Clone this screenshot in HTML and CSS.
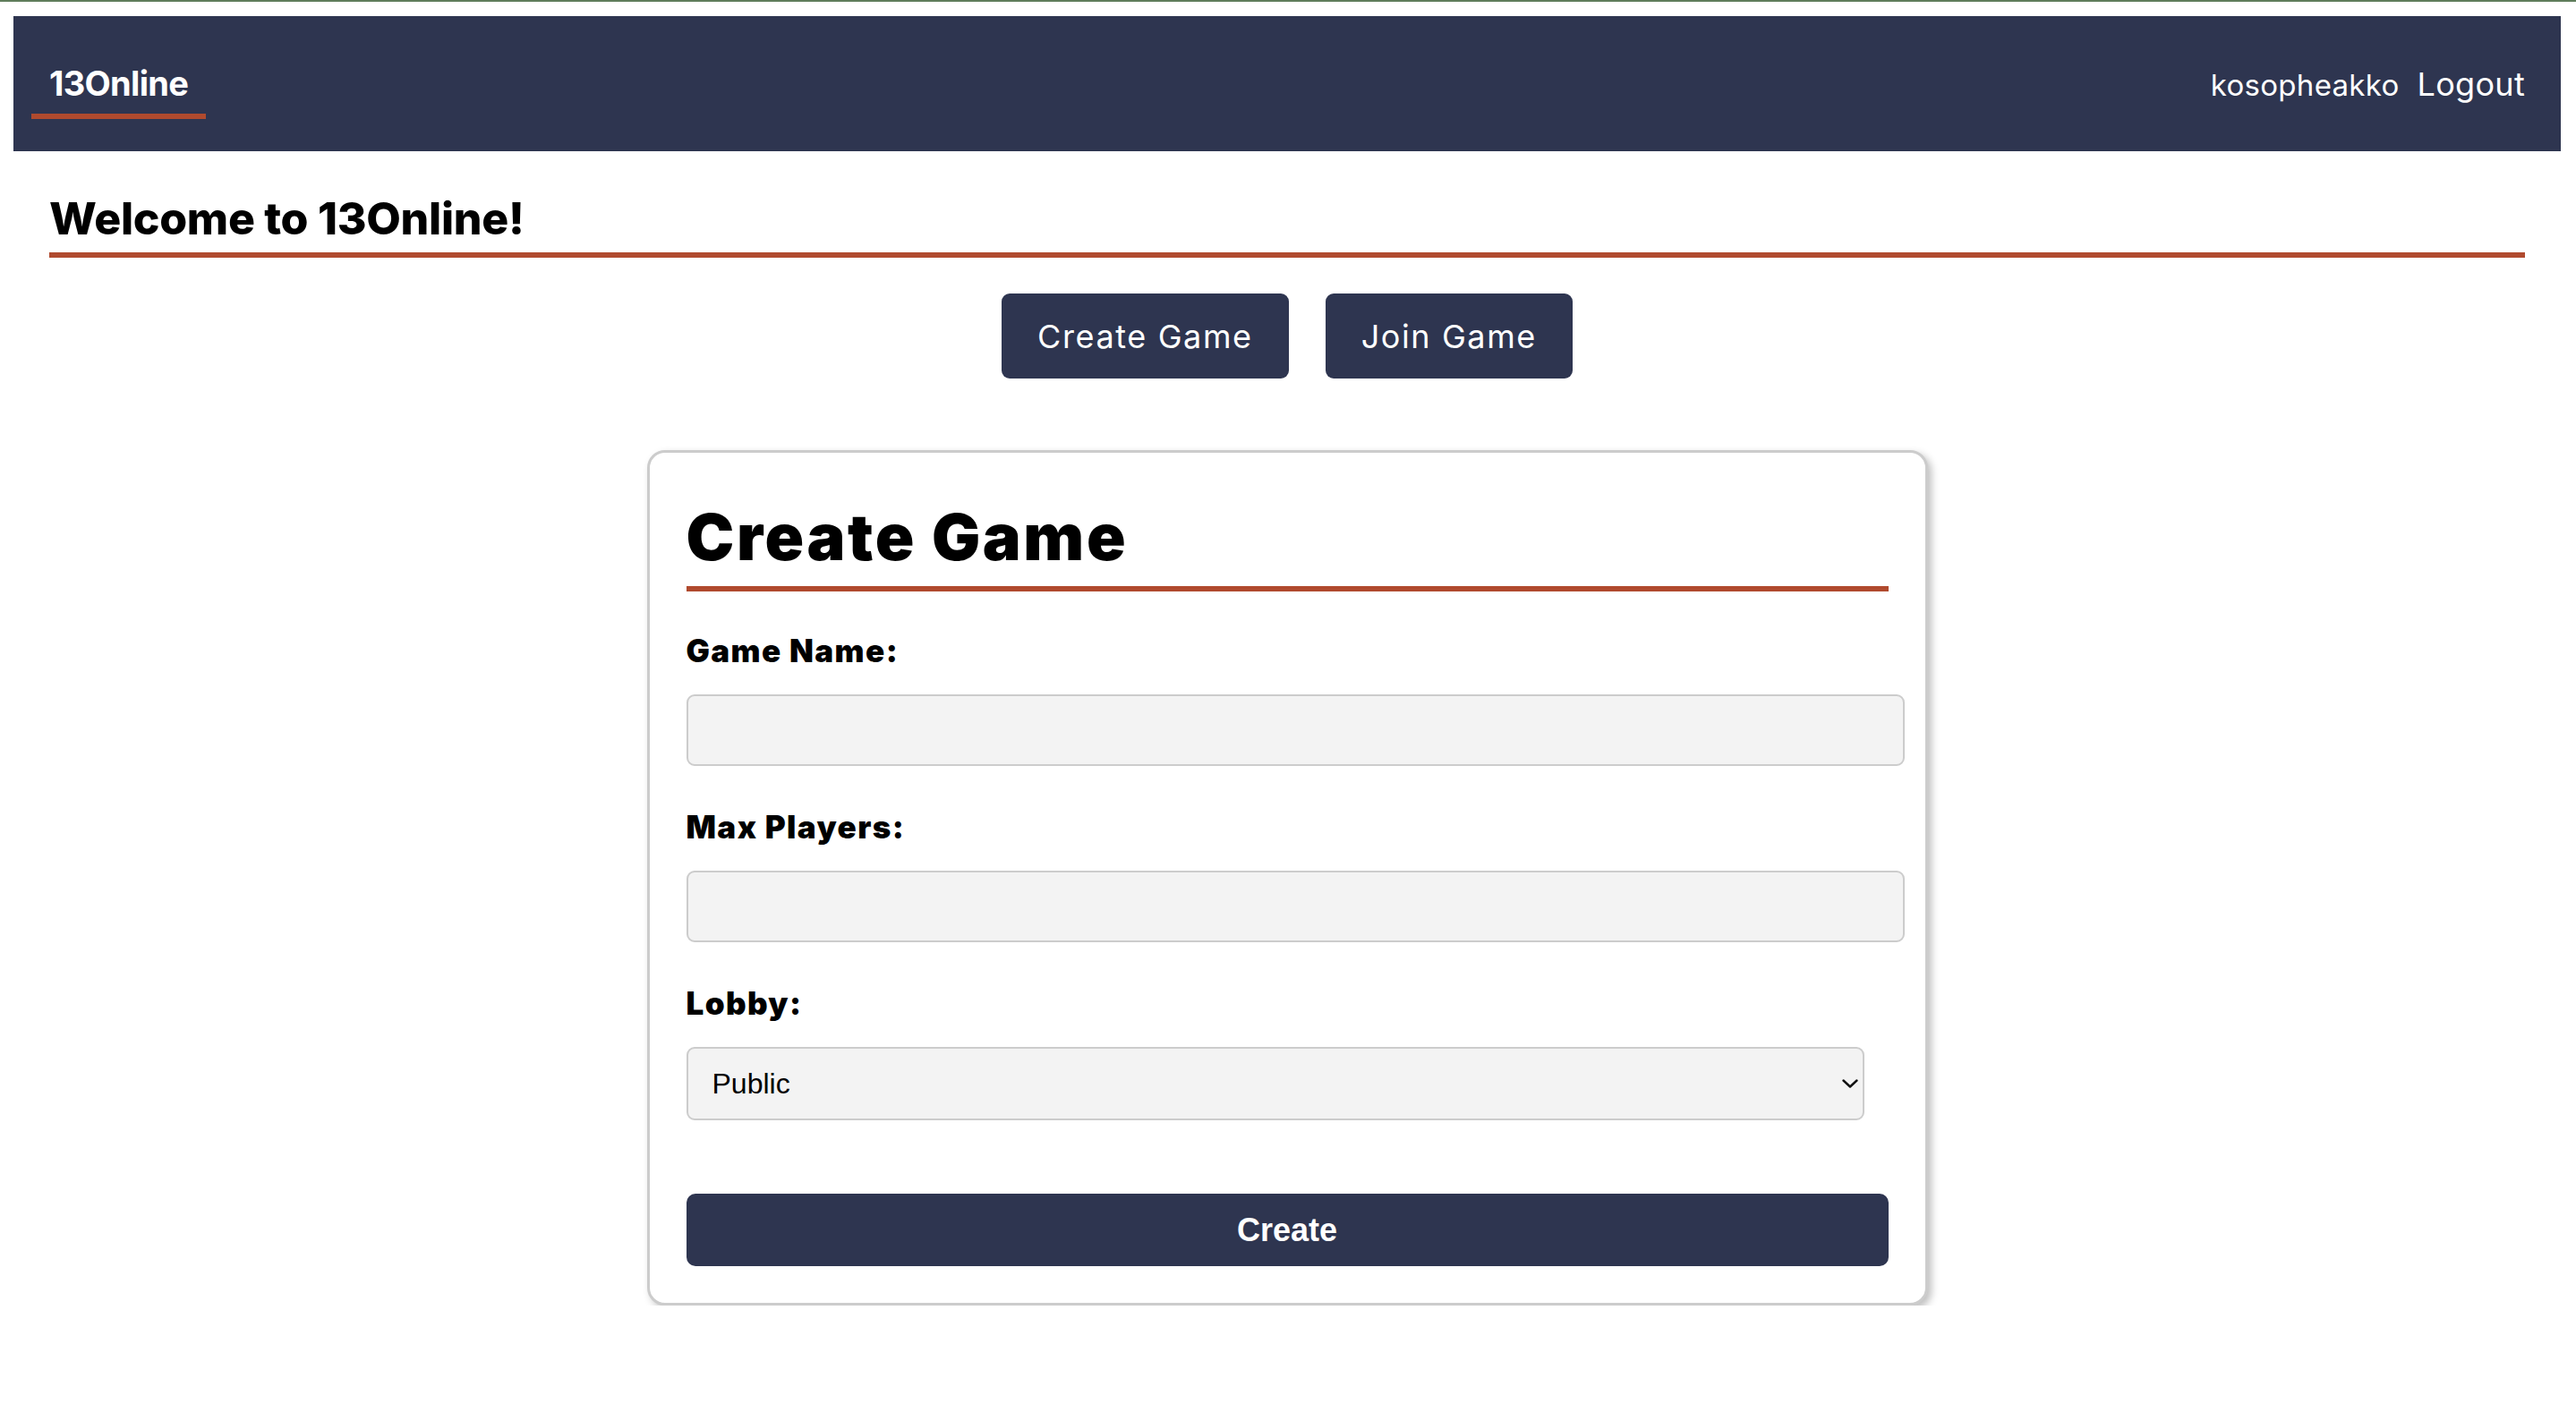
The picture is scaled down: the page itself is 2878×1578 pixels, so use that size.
FILE: index.html
```html
<!DOCTYPE html>
<html lang="en">
<head>
<meta charset="utf-8">
<title>13Online</title>
<link rel="stylesheet" href="styles.css">
</head>
<body>
<div class="topline"></div>
<div class="page">
  <nav class="nav">
    <a class="brand" href="#">13Online</a>
    <div class="user">
      <span class="username">kosopheakko</span>
      <a class="logout" href="#">Logout</a>
    </div>
  </nav>
  <main class="main">
    <h2 class="welcome">Welcome to 13Online!</h2>
    <div class="actions">
      <button class="btn" type="button">Create Game</button>
      <button class="btn" type="button">Join Game</button>
    </div>
    <section class="card">
      <h1 class="card-title">Create Game</h1>
      <form class="form">
        <div class="field">
          <label class="label" for="gname">Game Name:</label>
          <input class="input" id="gname" type="text">
        </div>
        <div class="field">
          <label class="label" for="gmax">Max Players:</label>
          <input class="input" id="gmax" type="text">
        </div>
        <div class="field">
          <label class="label" for="globby">Lobby:</label>
          <div class="select-wrap">
            <select class="select" id="globby">
              <option>Public</option>
              <option>Private</option>
            </select>
            <svg class="chev" width="18" height="10" viewBox="0 0 18 10" aria-hidden="true">
              <path d="M1.5 1.5 L9 8.5 L16.5 1.5" fill="none" stroke="#111" stroke-width="2.4" stroke-linecap="round" stroke-linejoin="round"/>
            </svg>
          </div>
        </div>
        <button class="submit" type="button">Create</button>
      </form>
    </section>
  </main>
</div>
</body>
</html>
```

FILE: styles.css
```css
* { box-sizing: border-box; }

html, body {
  margin: 0;
  padding: 0;
  background: #ffffff;
}

body {
  font-family: Inter, "Liberation Sans", sans-serif;
  color: #000;
}

.topline {
  height: 2px;
  background: #5f7d5b;
}

.page {
  padding: 16px 17px 0 15px;
}

.nav {
  height: 151px;
  background: #2e3550;
  display: flex;
  align-items: center;
  justify-content: space-between;
  padding: 0 20px;
}

.brand {
  display: block;
  color: #fff;
  text-decoration: none;
  font-weight: 700;
  font-size: 38px;
  line-height: 46px;
  letter-spacing: -0.7px;
  padding: 16px 20px 11px;
  border-bottom: 6px solid #b04a2e;
}

.user {
  display: flex;
  align-items: baseline;
  color: #fff;
}

.username {
  font-size: 33px;
  letter-spacing: 0.3px;
}

.logout {
  color: #fff;
  text-decoration: none;
  font-size: 36px;
  letter-spacing: 0.3px;
  padding: 0 20px;
}

.main {
  padding: 0 40px 0 40px;
}

.welcome {
  margin: 45px 0 0;
  font-size: 50px;
  line-height: 60px;
  font-weight: 800;
  letter-spacing: -0.3px;
  padding-bottom: 8px;
  border-bottom: 6px solid #b04a2e;
}

.actions {
  margin-top: 40px;
  display: flex;
  justify-content: center;
  gap: 41px;
}

.btn {
  height: 95px;
  padding: 0 40px;
  background: #2e3550;
  color: #fff;
  border: none;
  border-radius: 9px;
  font-family: Inter, "Liberation Sans", sans-serif;
  font-size: 36px;
  letter-spacing: 1.6px;
  cursor: pointer;
}

.card {
  width: 1431px;
  margin: 80px auto 0;
  border: 3px solid #cccccc;
  border-radius: 20px;
  padding: 41px 41px 41px;
  box-shadow: 4px 4px 8px rgba(0, 0, 0, 0.25);
  background: #fff;
}

.card-title {
  margin: 10px 0 0;
  font-size: 72px;
  line-height: 86px;
  font-weight: 900;
  letter-spacing: 2.6px;
  padding-bottom: 12px;
  border-bottom: 6px solid #b04a2e;
}

.form {
  margin-top: 45px;
}

.field {
  margin-bottom: 47px;
}

.label {
  display: block;
  font-size: 35px;
  line-height: 42px;
  font-weight: 900;
  letter-spacing: 1.4px;
  margin-bottom: 28px;
}

.input {
  display: block;
  box-sizing: content-box;
  width: 100%;
  height: 76px;
  padding: 0 7px;
  border: 2px solid #cccccc;
  border-radius: 9px;
  background: #f3f3f3;
  font-family: "Liberation Sans", Arial, sans-serif;
  font-size: 32px;
  outline: none;
}

.select-wrap {
  position: relative;
  width: 98%;
}

.select {
  display: block;
  width: 100%;
  height: 82px;
  appearance: none;
  -webkit-appearance: none;
  border: 2px solid #cccccc;
  border-radius: 9px;
  background: #f3f3f3;
  padding: 0 60px 0 27px;
  font-family: "Liberation Sans", Arial, sans-serif;
  font-size: 32px;
  color: #000;
  outline: none;
}

.chev {
  position: absolute;
  right: 7px;
  top: 36px;
  pointer-events: none;
}

.submit {
  display: block;
  width: 100%;
  height: 81px;
  margin-top: 82px;
  background: #2e3550;
  color: #fff;
  border: none;
  border-radius: 10px;
  font-family: "Liberation Sans", Arial, sans-serif;
  font-weight: 700;
  font-size: 36px;
  cursor: pointer;
}
```
